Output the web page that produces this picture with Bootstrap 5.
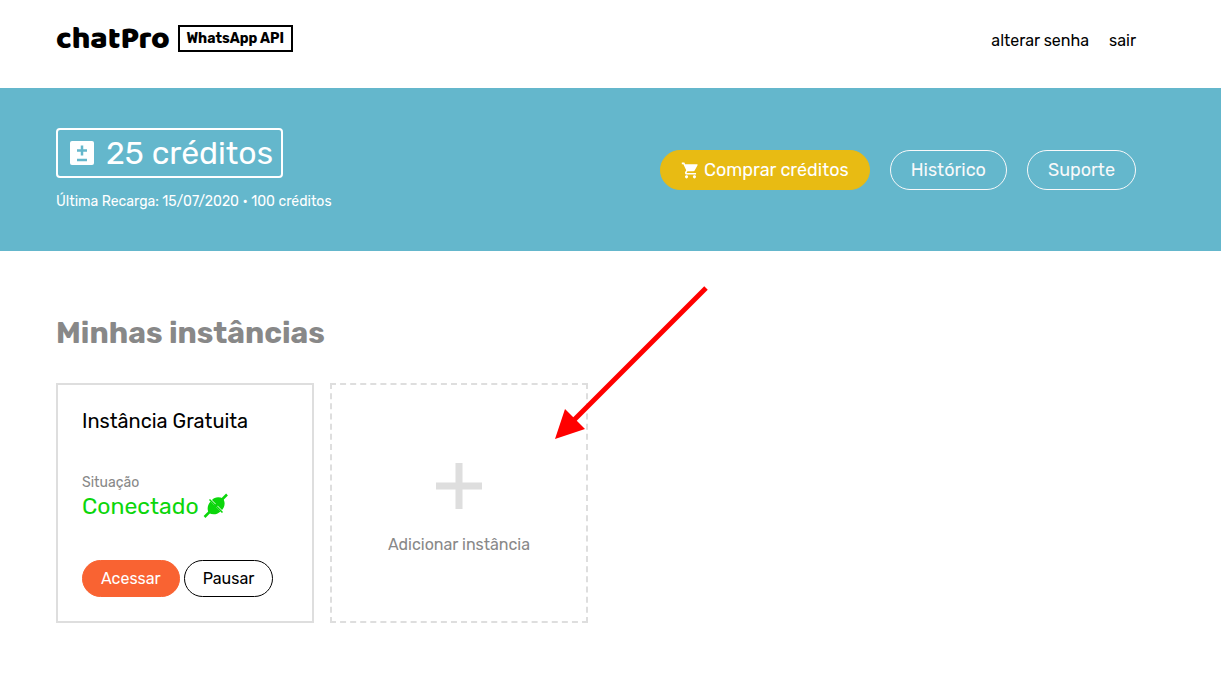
<!DOCTYPE html>
<html lang="pt-BR">
<head>
<meta charset="utf-8">
<meta name="viewport" content="width=device-width, initial-scale=1">
<title>chatPro - WhatsApp API</title>
<link href="https://cdn.jsdelivr.net/npm/bootstrap@5.3.0/dist/css/bootstrap.min.css" rel="stylesheet">
<style>
  body { font-family: Rubik, Roboto, sans-serif; color: #000; background: #fff; }
  .page-gutter { padding-left: 56px; padding-right: 85px; }
  .topbar { min-height: 88px; padding-top: 25px; }
  .brand-name { font: 800 32px/30px "Baloo 2", Baloo, Nunito, Lato, sans-serif; min-width: 112px; }
  .brand-tag { border: 2px solid #000; font-size: 14px; line-height: 24px; height: 27px; font-weight: 700; width: 115px; }
  .top-link { font-size: 16px; line-height: 32px; }
  .banner { background: #64b7cc; padding-top: 40px; padding-bottom: 39px; }
  .credits { border: 2px solid #fff; border-radius: 4px; width: fit-content; height: 50px; padding: 0 8px 0 12px; gap: 12px; font-size: 32px; line-height: 46px; }
  .recharge { font-size: 14px; line-height: 20px; padding-top: 14px; }
  .pills { gap: 20px; }
  .pill { --bs-btn-border-radius: 20px; --bs-btn-padding-x: 20px; --bs-btn-padding-y: 0px; --bs-btn-font-size: 18px; --bs-btn-line-height: 38px; }
  .pill-sm { --bs-btn-padding-x: 18px; --bs-btn-font-size: 16px; --bs-btn-line-height: 35px; }
  .btn-buy { --bs-btn-bg: #e8bb13; --bs-btn-border-color: #e8bb13; --bs-btn-color: #fff; }
  .btn-access { --bs-btn-bg: #f96332; --bs-btn-border-color: #f96332; --bs-btn-color: #fff; }
  .btn-pause { --bs-btn-border-color: #000; --bs-btn-color: #000; }
  .section-title { color: #888; font-size: 30px; line-height: 38px; font-weight: 700; margin: 63px 0 31px; }
  .instances { display: grid; grid-template-columns: repeat(auto-fill, minmax(240px, 1fr)); gap: 16px; }
  .instance { border: 2px solid #dedede; min-height: 240px; padding: 24px; }
  .instance-name { font-size: 20px; line-height: 24px; margin-bottom: 40px; }
  .muted-text { color: #888; }
  .state-label { font-size: 14px; line-height: 20px; }
  .state { color: #0bd60b; font-size: 23px; line-height: 26px; margin-bottom: 41px; }
  .instance-add { border-style: dashed; background: none; width: 100%; font-size: 16px; line-height: 24px; padding-top: 37px; }
  .pointer { right: -120px; top: -97px; pointer-events: none; }
</style>
</head>
<body>
<header class="topbar page-gutter d-flex justify-content-between align-items-start">
  <a href="#" class="d-flex gap-2 text-black text-decoration-none">
    <span class="brand-name">chatPro</span>
    <span class="brand-tag text-center text-nowrap">WhatsApp API</span>
  </a>
  <nav class="d-flex">
    <a href="#" class="top-link text-black text-decoration-none me-3 pe-1">alterar senha</a>
    <a href="#" class="top-link text-black text-decoration-none">sair</a>
  </nav>
</header>

<section class="banner page-gutter text-white d-flex flex-wrap justify-content-between align-items-center">
  <div>
    <div class="credits d-flex align-items-center">
      <svg width="24" height="24" viewBox="0 0 24 24" aria-hidden="true"><rect width="24" height="24" rx="2" fill="#fff"/><path d="M7 9.500h10M12 4.500v10M7 19h10" stroke="#64b7cc" stroke-width="2.500"/></svg>
      <span>25 créditos</span>
    </div>
    <div class="recharge">Última Recarga: 15/07/2020 • 100 créditos</div>
  </div>
  <div class="pills d-flex flex-wrap">
    <button type="button" class="btn pill btn-buy d-flex align-items-center gap-1">
      <svg width="19" height="19" viewBox="0 0 24 24" fill="currentColor" aria-hidden="true"><path d="M7 18c-1.100 0-1.990.9-1.990 2S5.900 22 7 22s2-.9 2-2-.9-2-2-2zM1 2v2h2l3.600 7.590-1.350 2.450c-.16.280-.25.610-.25.960 0 1.100.9 2 2 2h12v-2H7.420c-.14 0-.25-.11-.25-.25l.03-.12.900-1.630h7.450c.75 0 1.410-.41 1.750-1.030l3.580-6.490A1 1 0 0 0 20 4H5.210l-.94-2H1zm16 16c-1.100 0-1.990.9-1.990 2s.89 2 1.990 2 2-.9 2-2-.9-2-2-2z"/></svg>
      Comprar créditos
    </button>
    <button type="button" class="btn pill btn-outline-light">Histórico</button>
    <button type="button" class="btn pill btn-outline-light">Suporte</button>
  </div>
</section>

<main class="page-gutter pb-5">
  <h1 class="section-title">Minhas instâncias</h1>
  <div class="instances">
    <article class="instance">
      <h2 class="instance-name fw-normal">Instância Gratuita</h2>
      <div class="state-label muted-text">Situação</div>
      <div class="state d-flex align-items-center gap-1">Conectado
        <svg width="26" height="26" viewBox="0 0 26 26" fill="currentColor" aria-hidden="true"><path d="M1.500 24L24 1.500" stroke="currentColor" stroke-width="2.500"/><path d="M6.500 6.500L19.500 19.500" stroke="currentColor" stroke-width="1.500"/><path d="M9 7C11.500 4 16 3.500 20 5.500C22.500 9 22 14 19 17ZM7.500 8.500L17.500 18.500C13.500 22 9.500 22 6 20C4 17 4 12.500 7.500 8.500Z"/></svg>
      </div>
      <div class="d-flex gap-1">
        <button type="button" class="btn pill pill-sm btn-access">Acessar</button>
        <button type="button" class="btn pill pill-sm btn-pause">Pausar</button>
      </div>
    </article>
    <div class="position-relative">
      <button type="button" class="instance instance-add muted-text d-flex flex-column align-items-center justify-content-center">
        <svg class="mb-4" width="46" height="46" viewBox="0 0 46 46" aria-hidden="true"><path d="M0 23h46M23 0v46" stroke="#dedede" stroke-width="7"/></svg>
        Adicionar instância
      </button>
      <svg class="pointer position-absolute" width="153" height="153" viewBox="0 0 153 153" aria-hidden="true"><path d="M151 2L18 135" stroke="#f00" stroke-width="5"/><path d="M0 153L10 123L30 143Z" fill="#f00"/></svg>
    </div>
  </div>
</main>
<script src="https://cdn.jsdelivr.net/npm/bootstrap@5.3.0/dist/js/bootstrap.bundle.min.js"></script>
</body>
</html>
